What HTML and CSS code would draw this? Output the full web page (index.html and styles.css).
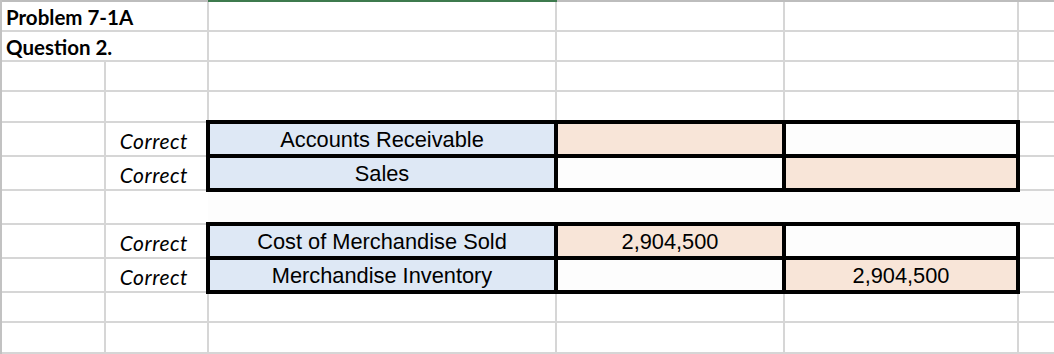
FILE: index.html
```html
<!DOCTYPE html>
<html>
<head>
<meta charset="utf-8">
<link rel="stylesheet" href="styles.css">
</head>
<body>
<div class="sheet">
  <div class="colheads"><span class="hd-sel"></span></div>
  <table class="grid">
    <colgroup>
      <col class="c-a"><col class="c-b"><col class="c-c"><col class="c-d"><col class="c-e"><col class="c-f">
    </colgroup>
    <tr class="r1"><td colspan="2" class="title">Problem 7-1A</td><td></td><td></td><td></td><td></td></tr>
    <tr class="r2"><td colspan="2" class="title">Question 2.</td><td></td><td></td><td></td><td></td></tr>
    <tr class="r3"><td></td><td></td><td></td><td></td><td></td><td></td></tr>
    <tr class="r4"><td></td><td></td><td></td><td></td><td></td><td></td></tr>
    <tr class="r5"><td></td><td class="ok">Correct</td><td class="bx blue">Accounts Receivable</td><td class="bx peach"></td><td class="bx plain"></td><td></td></tr>
    <tr class="r6"><td></td><td class="ok">Correct</td><td class="bx blue">Sales</td><td class="bx plain"></td><td class="bx peach"></td><td></td></tr>
    <tr class="r7"><td></td><td class="gap-l"></td><td class="fill"></td><td class="fill"></td><td class="fill"></td><td class="fill fill-end"></td></tr>
    <tr class="r8"><td></td><td class="ok">Correct</td><td class="bx blue">Cost of Merchandise Sold</td><td class="bx peach">2,904,500</td><td class="bx plain"></td><td></td></tr>
    <tr class="r9"><td></td><td class="ok">Correct</td><td class="bx blue">Merchandise Inventory</td><td class="bx plain"></td><td class="bx peach">2,904,500</td><td></td></tr>
    <tr class="r10"><td></td><td></td><td></td><td></td><td></td><td></td></tr>
    <tr class="r11"><td></td><td></td><td></td><td></td><td></td><td></td></tr>
  </table>
</div>
</body>
</html>
```

FILE: styles.css
```css
html, body {
  margin: 0;
  padding: 0;
  background: #ffffff;
  overflow: hidden;
}

.sheet {
  width: 1054px;
  height: 354px;
  overflow: hidden;
  box-sizing: border-box;
  border-left: 2px solid #c2c2c2;
}

.colheads {
  height: 2px;
  background: #bdbdbd;
  display: flex;
}

.hd-sel {
  margin-left: 206px;
  width: 349px;
  background: #3d7a4e;
}

.grid {
  border-collapse: collapse;
  table-layout: fixed;
  width: 1136px;
}

.c-a { width: 103px; }
.c-b { width: 103px; }
.c-c { width: 348px; }
.c-d { width: 228px; }
.c-e { width: 234px; }
.c-f { width: 120px; }

.grid td {
  border: 2px solid #d6d6d6;
  padding: 0 6px 2px;
  vertical-align: bottom;
  white-space: nowrap;
  overflow: hidden;
  color: #000;
  font-family: "Liberation Sans", Arial, sans-serif;
  font-size: 21.8px;
}

.grid tr:first-child td { border-top: none; }
.grid tr td:first-child { border-left: none; }

.r1 { height: 29px; }
.r2 { height: 30px; }
.r3 { height: 30px; }
.r4 { height: 31px; }
.r5 { height: 34px; }
.r6 { height: 34px; }
.r7 { height: 34px; }
.r8 { height: 34px; }
.r9 { height: 34px; }
.r10 { height: 30px; }
.r11 { height: 31px; }

.grid td.title {
  font-family: Lato, "Open Sans", sans-serif;
  font-weight: 700;
  font-size: 20.5px;
  padding: 0 4px 1px;
}

.grid td.ok {
  font-family: Lato, "Open Sans", sans-serif;
  font-style: italic;
  font-size: 21px;
  letter-spacing: 0.5px;
  text-align: right;
  padding: 0 18px 2px 0;
}

.grid td.bx {
  border: 4px solid #000;
  text-align: center;
  padding: 0 4px 1px;
}

.blue { background: #dee8f5; }
.peach { background: #f8e5d8; }
.plain { background: #fdfdfd; }

.grid td.gap-l { border-right: none; }
.grid td.fill {
  background: #fdfdfd;
  border-left: none;
  border-right: none;
}
```
